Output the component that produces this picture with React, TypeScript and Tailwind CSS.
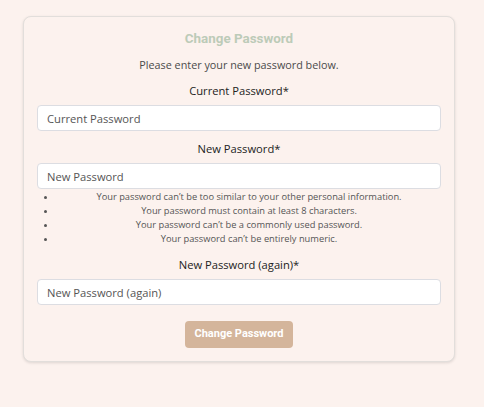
export default function App() {
  const rules = [
    "Your password can’t be too similar to your other personal information.",
    "Your password must contain at least 8 characters.",
    "Your password can’t be a commonly used password.",
    "Your password can’t be entirely numeric.",
  ];

  return (
    <div className="min-h-[407px] w-full bg-[#fcf2ee] pt-4 font-['Open_Sans',sans-serif]">
      <div className="ml-[23px] w-[432px] rounded-lg border border-[#e2dedb] bg-[#fcf2ee] px-[13px] pt-[13px] pb-[13px] shadow-[0_1px_3px_rgba(0,0,0,0.12)]">
        <h2 className="text-center font-['Roboto',sans-serif] text-[13.4px] leading-[18px] font-bold text-[#bccbb8]">
          Change Password
        </h2>
        <p className="mt-[9px] text-center text-[10.8px] leading-[16px] text-[#4a4a4a]">
          Please enter your new password below.
        </p>

        <label className="mt-[10px] block text-center text-[11.2px] leading-[16px] text-[#222]">
          Current Password*
        </label>
        <input
          type="password"
          placeholder="Current Password"
          className="mt-[6px] block h-[26px] w-full rounded border border-[#dcdde2] bg-white px-[9px] text-[11.2px] text-[#333] placeholder:text-[#555] outline-none"
        />

        <label className="mt-[10px] block text-center text-[11.2px] leading-[16px] text-[#222]">
          New Password*
        </label>
        <input
          type="password"
          placeholder="New Password"
          className="mt-[6px] block h-[26px] w-full rounded border border-[#dcdde2] bg-white px-[9px] text-[11.2px] text-[#333] placeholder:text-[#555] outline-none"
        />
        <ul className="mt-[1px] list-disc pl-[20px] text-center text-[9.3px] leading-[14px] text-[#555]">
          {rules.map((r) => (
            <li key={r}>{r}</li>
          ))}
        </ul>

        <label className="mt-[11px] block text-center text-[11.2px] leading-[16px] text-[#222]">
          New Password (again)*
        </label>
        <input
          type="password"
          placeholder="New Password (again)"
          className="mt-[6px] block h-[26px] w-full rounded border border-[#dcdde2] bg-white px-[9px] text-[11.2px] text-[#333] placeholder:text-[#555] outline-none"
        />

        <div className="mt-[16px] flex justify-center">
          <button className="h-[27px] w-[108px] rounded bg-[#d4b59b] font-['Roboto',sans-serif] text-[11px] font-bold text-white">
            Change Password
          </button>
        </div>
      </div>
    </div>
  );
}
